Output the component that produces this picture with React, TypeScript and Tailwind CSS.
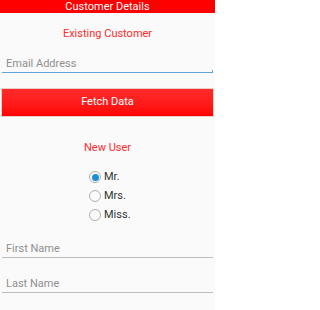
export default function App() {
  return (
    <div className="w-[215px] h-[310px] bg-[#fafafa] overflow-hidden" style={{ fontFamily: "Roboto, 'Liberation Sans', sans-serif" }}>
      {/* title bar */}
      <div className="h-[13px] bg-[#ff0000] flex items-center justify-center text-white text-[11px] leading-none">
        Customer Details
      </div>

      <div className="mt-[14px] text-center text-[#ff2a2a] text-[11px] leading-[14px]">Existing Customer</div>

      <div className="mt-[16px] mx-[2px]">
        <div className="pl-[4px] text-[#8f8f8f] text-[11px] leading-[14px] pb-[1px]">Email Address</div>
        <div className="relative h-[1px] bg-[#5ea5d8]">
          <span className="absolute right-0 bottom-0 w-[1px] h-[3px] bg-[#5ea5d8]" />
        </div>
      </div>

      <div className="mt-[15px] mx-[1px] h-[29px] border border-[#e8cfc8] bg-gradient-to-b from-[#ff2a2a] to-[#ff0000] flex items-center justify-center text-white text-[11px]">
        Fetch Data
      </div>

      <div className="mt-[24px] text-center text-[#ff2a2a] text-[11px] leading-[14px]">New User</div>

      <div className="mt-[15px] ml-[89px] flex flex-col gap-[5px]">
        {["Mr.", "Mrs.", "Miss."].map((t, i) => (
          <div key={t} className="flex items-center gap-[3px] h-[14px]">
            <span className="w-[12px] h-[12px] rounded-full border border-[#b0b0b0] flex items-center justify-center">
              {i === 0 && <span className="w-[7px] h-[7px] rounded-full bg-[#1b8fd6]" />}
            </span>
            <span className="text-[#333] text-[11px]">{t}</span>
          </div>
        ))}
      </div>

      <div className="mt-[20px] mx-[2px]">
        <div className="pl-[4px] text-[#8f8f8f] text-[11px] leading-[14px] pb-[1px]">First Name</div>
        <div className="h-[1px] bg-[#bdbdbd]" />
      </div>

      <div className="mt-[19px] mx-[2px]">
        <div className="pl-[4px] text-[#8f8f8f] text-[11px] leading-[14px] pb-[1px]">Last Name</div>
        <div className="h-[1px] bg-[#bdbdbd]" />
      </div>
    </div>
  )
}
